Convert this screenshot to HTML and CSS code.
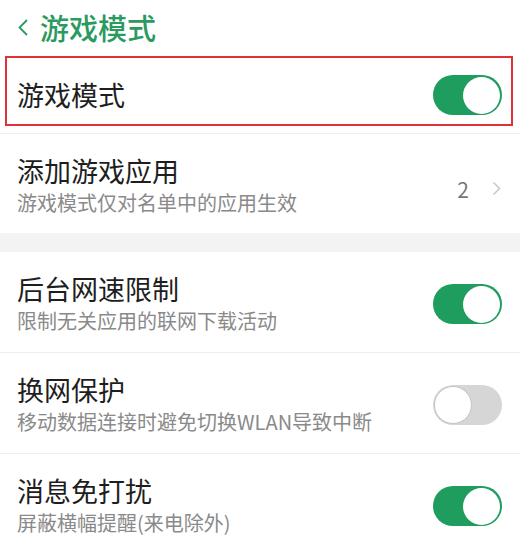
FILE: index.html
```html
<!DOCTYPE html>
<html lang="zh-CN">
<head>
<meta charset="utf-8">
<link rel="stylesheet" href="styles.css">
</head>
<body>
<div class="page">
  <header class="header">
    <svg class="back" width="12" height="17" viewBox="0 0 12 17"><polyline points="10,1 2.5,8.5 10,16" fill="none" stroke="#2a9a5f" stroke-width="1.8"/></svg>
    <span class="title">游戏模式</span>
  </header>

  <div class="hl-wrap">
    <div class="hl-box">
      <span class="row-title">游戏模式</span>
      <span class="toggle on"><span class="knob"></span></span>
    </div>
  </div>

  <div class="row">
    <div class="texts">
      <div class="row-title">添加游戏应用</div>
      <div class="row-sub">游戏模式仅对名单中的应用生效</div>
    </div>
    <div class="meta">
      <span class="count">2</span>
      <svg class="chev" width="9" height="15" viewBox="0 0 9 15"><polyline points="1.5,1.5 7.5,7.5 1.5,13.5" fill="none" stroke="#c9c9c9" stroke-width="1.6"/></svg>
    </div>
  </div>

  <div class="band"></div>

  <div class="row bordered">
    <div class="texts">
      <div class="row-title">后台网速限制</div>
      <div class="row-sub">限制无关应用的联网下载活动</div>
    </div>
    <span class="toggle on"><span class="knob"></span></span>
  </div>

  <div class="row bordered">
    <div class="texts">
      <div class="row-title">换网保护</div>
      <div class="row-sub">移动数据连接时避免切换WLAN导致中断</div>
    </div>
    <span class="toggle off"><span class="knob"></span></span>
  </div>

  <div class="row">
    <div class="texts">
      <div class="row-title">消息免打扰</div>
      <div class="row-sub">屏蔽横幅提醒(来电除外)</div>
    </div>
    <span class="toggle on"><span class="knob"></span></span>
  </div>
</div>
</body>
</html>
```

FILE: styles.css
```css
* { box-sizing: border-box; }
html, body { margin: 0; padding: 0; background: #ffffff; }
body {
  font-family: "Noto Sans CJK SC", "Noto Sans", sans-serif;
  color: #1e1e1e;
  width: 520px;
  height: 548px;
  overflow: hidden;
}
.page { display: flex; flex-direction: column; }

.header {
  height: 56px;
  display: flex;
  align-items: center;
  padding: 0 0 3px 17px;
  gap: 11px;
}
.back { display: block; margin-top: 1px; }
.title {
  font-size: 29px;
  line-height: 40px;
  font-weight: 500;
  color: #2a9a5f;
}

.hl-wrap {
  height: 78px;
  padding: 0 7px 7px 5px;
  border-bottom: 1px solid #efefef;
}
.hl-box {
  height: 70px;
  border: 2px solid #e03139;
  display: flex;
  align-items: center;
  justify-content: space-between;
  padding: 8px 9px 0 10px;
}

.row {
  height: 99px;
  display: flex;
  align-items: center;
  justify-content: space-between;
  padding: 4px 18px 0 17px;
}
.row.bordered {
  height: 101px;
  border-bottom: 1px solid #efefef;
}
.row:last-child { height: 100px; }

.texts { display: flex; flex-direction: column; }
.row-title {
  font-size: 27px;
  line-height: 34px;
  color: #1e1e1e;
}
.row-sub {
  font-size: 20px;
  line-height: 30px;
  color: #8a8a8a;
}

.meta {
  display: flex;
  align-items: center;
  gap: 23px;
  margin-top: 6px;
}
.count {
  font-size: 21px;
  line-height: 24px;
  color: #777777;
}
.chev { display: block; margin-right: 1px; }

.band {
  height: 19px;
  background: #f3f3f3;
}

.toggle {
  width: 69px;
  height: 40px;
  border-radius: 20px;
  display: flex;
  align-items: center;
  padding: 0 2px;
  flex: none;
}
.toggle.on {
  background: #1f9d5e;
  justify-content: flex-end;
}
.toggle.off {
  background: #d6d6d6;
  justify-content: flex-start;
}
.knob {
  width: 37px;
  height: 37px;
  border-radius: 50%;
  background: #ffffff;
}
.toggle.off .knob {
  width: 38px;
  height: 38px;
  border: 1.5px solid #c4c4c4;
  margin-left: -1px;
}
```
